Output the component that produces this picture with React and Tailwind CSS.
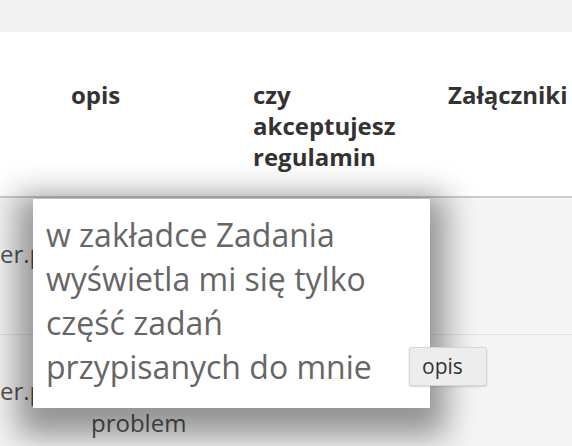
import React from 'react';

export default function App() {
  return (
    <div
      className="relative w-[572px] h-[446px] overflow-hidden bg-white"
      style={{ fontFamily: '"Open Sans", "Noto Sans", sans-serif' }}
    >
      {/* top bar */}
      <div className="h-[32px] bg-[#f2f2f2]" />

      {/* header */}
      <div className="grid grid-cols-[71px_182px_195px_1fr] h-[166px] border-b-2 border-[#cccccc] text-[24px] font-bold text-[#333] leading-[31px]">
        <div />
        <div className="pt-[47px]">opis</div>
        <div className="pt-[47px]">
          czy
          <br />
          akceptujesz
          <br />
          regulamin
        </div>
        <div className="pt-[47px] whitespace-nowrap">Załączniki</div>
      </div>

      {/* row 1 */}
      <div className="grid grid-cols-[71px_182px_158px_1fr] h-[137px] bg-[#f5f5f5] border-b border-[#e2e2e2] text-[24px] text-[#555]">
        <div className="overflow-hidden whitespace-nowrap pt-[38px]">er.pl</div>
        <div />
        <div />
        <div />
      </div>

      {/* row 2 */}
      <div className="grid grid-cols-[71px_182px_158px_1fr] h-[120px] bg-[#f5f5f5] text-[24px] text-[#555]">
        <div className="overflow-hidden whitespace-nowrap pt-[38px]">er.pl</div>
        <div className="pt-[70px] pl-[20px]">problem</div>
        <div />
        <div className="pt-[12px] ml-[-2px]">
          <button className="relative z-10 w-[78px] h-[39px] bg-[#ededed] border border-[#d6d6d6] rounded-[2px] text-[21px] text-[#333] text-left pl-[12px] shadow-[0_1px_2px_rgba(0,0,0,0.15)]">
            opis
          </button>
        </div>
      </div>

      {/* tooltip */}
      <div className="absolute left-[33px] top-[199px] w-[397px] h-[209px] bg-white pl-[13px] pt-[14px] text-[32px] leading-[44px] text-[#666] whitespace-nowrap shadow-[0_12px_30px_16px_rgba(0,0,0,0.4)]">
        w zakładce Zadania
        <br />
        wyświetla mi się tylko
        <br />
        część zadań
        <br />
        przypisanych do mnie
      </div>
    </div>
  );
}
